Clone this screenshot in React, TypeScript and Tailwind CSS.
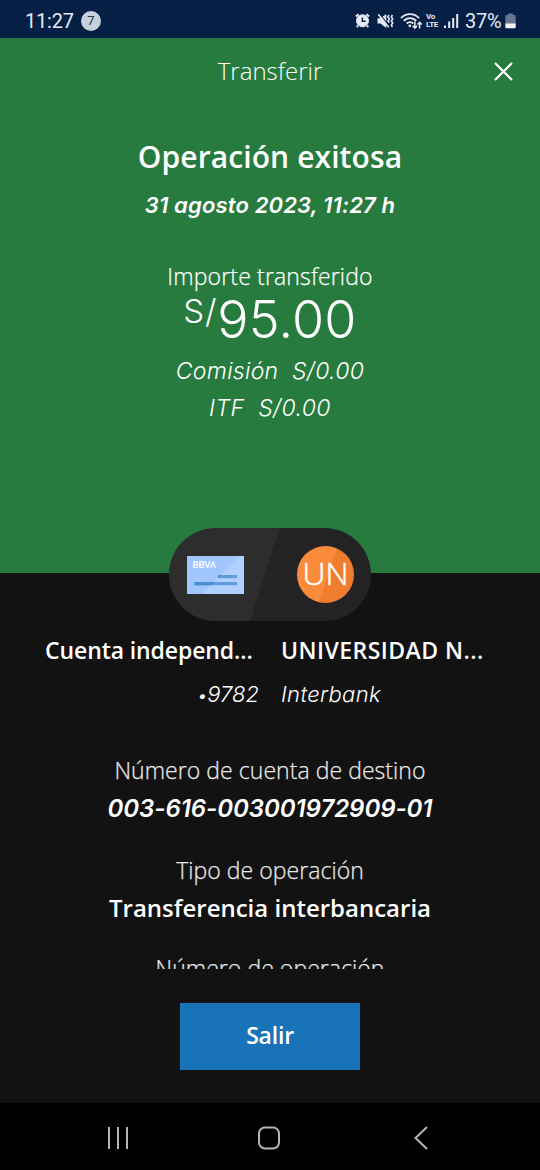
import type { ReactNode } from "react";

function StatusBar() {
  return (
    <div className="flex h-[38px] items-center bg-[#061f45] pt-[3px] pr-6 pl-[25px] font-['Roboto',sans-serif] text-[#e4eaf5]">
      <span className="text-[20px] tracking-[-0.2px]">11:27</span>
      <span className="ml-[7px] flex size-[20px] items-center justify-center rounded-full bg-[#c8cfdd] text-[13px] text-[#27334c]">7</span>
      <div className="ml-auto flex items-center">
        {/* Alarm */}
        <svg width="15" height="15" viewBox="0 0 15 15" fill="none" stroke="#e4eaf5">
          <circle cx="7.5" cy="7.8" r="6" fill="#e4eaf5" />
          <path d="M.9 3.6 3.6 1.2M14.1 3.6l-2.7-2.4M3 12.5l-1.2 1.7M12 12.5l1.2 1.7" strokeWidth="2" />
          <path d="M7.4 4.4v3.8h3.2" stroke="#061f45" strokeWidth="1.5" />
        </svg>
        {/* Muted, vibrating */}
        <svg className="ml-[7px]" width="17" height="16" viewBox="0 0 17 16" fill="none" stroke="#e4eaf5">
          <path d="M.5 5.2h3L9.3 1v14L3.5 10.6h-3z" fill="#e4eaf5" stroke="none" />
          <path d="M2.2.6l10.500 13" stroke="#061f45" strokeWidth="1.2" />
          <path d="M1.2 1.2l10.600 13" strokeWidth="1.5" />
          <path d="M12 2l-1.2 2 1.7 2-1.5 2 1.3 1.7M15.5 2l-1.2 2 1.5 2-1.5 2 1.5 2-1.5 2 1.2 2" strokeWidth="1.5" />
        </svg>
        {/* Wifi */}
        <svg className="ml-[6px]" width="23" height="18" viewBox="0 0 23 18" fill="none" stroke="#e4eaf5" strokeWidth="1.9">
          <path d="M1 6.200a12 12 0 0 1 18 0M3.800 9a8.200 8.200 0 0 1 12.400 0M6.700 11.500a4.600 4.600 0 0 1 6.600 0" />
          <circle cx="9.8" cy="13.8" r="1.4" fill="#e4eaf5" stroke="none" />
          <path d="M14.900 9.500v6.500M12.700 13.800l2.200 2.300 2.200-2.300M19.600 16.500v-6M17.500 12.600l2.100-2.300 2.100 2.300" strokeWidth="1.5" />
        </svg>
        <span className="ml-[3px] flex w-[14px] flex-col text-[8px] leading-[8px] font-bold tracking-[-0.3px]">
          <span>Vo</span>
          <span>LTE</span>
        </span>
        <svg className="ml-[4px]" width="15" height="16" viewBox="0 0 15 16" fill="#e4eaf5">
          <path d="M0 12.500h2V15H0zM4.200 8.500h2V15h-2zM8.200 5h2v10h-2zM12.200 1h2v14h-2z" />
        </svg>
        <span className="ml-[6px] w-[40px] text-[20px] tracking-[-0.2px]">37%</span>
        <svg width="11" height="16" viewBox="0 0 11 16">
          <path d="M3 .5h5V2h1.500a1.200 1.200 0 0 1 1.200 1.200V11H.3V3.200A1.200 1.200 0 0 1 1.500 2H3z" fill="#66758f" />
          <path d="M.3 10.500h10.400V14a1.300 1.300 0 0 1-1.300 1.300H1.600A1.300 1.300 0 0 1 .3 14z" fill="#f4f7fc" />
        </svg>
      </div>
    </div>
  );
}

function AccountsPill() {
  return (
    <div className="relative z-10 mx-auto -mt-[45px] flex h-[93px] w-[202px] items-center justify-between overflow-hidden rounded-full bg-[linear-gradient(108deg,#2d2d2d_47.5%,#232323_48%)] pr-[17px] pl-[18px]">
      {/* Account card */}
      <svg width="57" height="38" viewBox="0 0 57 38">
        <path d="M0 0h57v38H0z" fill="#b0d0ff" />
        <path d="M0 0h53L15 38H0z" fill="#a0c6fd" />
        <path d="M31 19h19v3.300H31zM7.500 26H50v3.300H7.500z" fill="#5f9edb" />
        <path d="M31 19h3.500l-3.500 3.300zM7.500 26H28l-3.500 3.300h-17z" fill="#4a90d0" />
        <text x="5.5" y="12" fill="#fff" fontFamily="Lato, sans-serif" fontSize="9" fontWeight="700" textLength="18" lengthAdjust="spacingAndGlyphs">BBV</text>
        <path d="M23.800 12l2.300-6 2.300 6" fill="none" stroke="#fff" strokeWidth="1.1" />
      </svg>
      <div className="flex size-[57px] items-center justify-center rounded-full bg-[linear-gradient(108deg,#fa8b3a_53%,#f07c30_54%)] pb-[3px] text-[32px] leading-none font-light text-white [-webkit-text-stroke:0.5px]">
        UN
      </div>
    </div>
  );
}

function Label({ children }: { children: ReactNode }) {
  return (
    <p className="text-[23px] leading-[30px] font-light tracking-[0.05px] text-[#e8e8e8] [-webkit-text-stroke:0.25px]">
      {children}
    </p>
  );
}

function NavBar() {
  return (
    <div className="flex h-[67px] items-center bg-black pt-[2px] pl-[107px] text-[#b5b5b5]">
      <svg width="22" height="24" viewBox="0 0 22 24" fill="none" stroke="currentColor" strokeWidth="2">
        <path d="M2 1v22M11 1v22M20 1v22" />
      </svg>
      <svg className="ml-[128px]" width="24" height="24" viewBox="0 0 24 24" fill="none" stroke="currentColor" strokeWidth="2">
        <rect x="2" y="1.5" width="20" height="21" rx="6" />
      </svg>
      <svg className="ml-[133px]" width="14" height="24" viewBox="0 0 14 24" fill="none" stroke="currentColor" strokeWidth="2">
        <path d="M13 1 1.500 12 13 23" />
      </svg>
    </div>
  );
}

export default function App() {
  return (
    <div className="flex h-[1170px] w-[540px] flex-col overflow-hidden bg-[#121212] font-['Open_Sans',sans-serif] whitespace-nowrap text-white">
      <StatusBar />

      <section className="h-[535px] bg-[#277b3e] text-center">
        <header className="flex h-[66px] items-center justify-between pr-[27px] pl-[46px]">
          <span className="w-0" />
          <h1 className="text-[24px] font-light">Transferir</h1>
          <svg width="19" height="19" viewBox="0 0 19 19" fill="none" stroke="#fff" strokeWidth="2.2">
            <path d="m1 1 17 17M18 1 1 18" />
          </svg>
        </header>

        <h2 className="mt-[35px] text-[30px] leading-[36px] font-semibold tracking-[0.1px]">Operación exitosa</h2>
        <p className="mt-[15px] font-['Inter',sans-serif] text-[22px] leading-[31px] font-semibold tracking-[0.15px] italic">31 agosto 2023, 11:27 h</p>

        <p className="mt-[40px] text-[23px] leading-[30px] font-light tracking-[0.15px] [-webkit-text-stroke:0.25px]">Importe transferido</p>
        <div className="mt-px flex h-[50px] justify-center font-['Inter',sans-serif] font-light">
          <span className="mt-[4px] text-[33px] leading-[30px] tracking-[0.8px]">S/</span>
          <span className="mt-px text-[52px] leading-[53px] tracking-[0.2px]">95.00</span>
        </div>
        <p className="mt-[14px] font-['Inter',sans-serif] text-[23px] leading-[30px] font-light tracking-[0.3px] italic">
          Comisión&nbsp; S/0.00
        </p>
        <p className="mt-[7px] font-['Inter',sans-serif] text-[23px] leading-[30px] font-light tracking-[0.4px] italic">
          ITF&nbsp; S/0.00
        </p>
      </section>

      <AccountsPill />

      <main className="h-[348px] overflow-hidden text-center">
        <div className="mt-[14px] grid grid-cols-2 gap-x-[22px] px-[45px] text-left text-[23px] leading-[30px]">
          <p className="font-semibold tracking-[-0.1px]">Cuenta independ...</p>
          <p className="font-semibold tracking-[0.45px]">UNIVERSIDAD N...</p>
          <p className="mt-[14px] text-right font-['Inter',sans-serif] text-[22px] font-light italic">
            <span className="text-[18px] leading-none">•</span>9782
          </p>
          <p className="mt-[14px] font-['Inter',sans-serif] text-[22px] font-light tracking-[0.35px] italic">Interbank</p>
        </div>

        <div className="mt-[46px]">
          <Label>Número de cuenta de destino</Label>
          <p className="mt-[8px] font-['Inter',sans-serif] text-[24px] leading-[31px] font-semibold tracking-[-0.05px] italic">003-616-003001972909-01</p>
        </div>
        <div className="mt-[31px]">
          <Label>Tipo de operación</Label>
          <p className="mt-[8px] text-[24px] leading-[30px] font-semibold">Transferencia interbancaria</p>
        </div>
        <div className="mt-[30px]">
          <Label>Número de operación</Label>
        </div>
      </main>

      <footer className="flex h-[134px] justify-center pt-[34px]">
        <button className="h-[67px] w-[180px] bg-[#1973b8] pb-[3px] text-[23px] font-semibold tracking-[-0.2px]">Salir</button>
      </footer>

      <NavBar />
    </div>
  );
}
